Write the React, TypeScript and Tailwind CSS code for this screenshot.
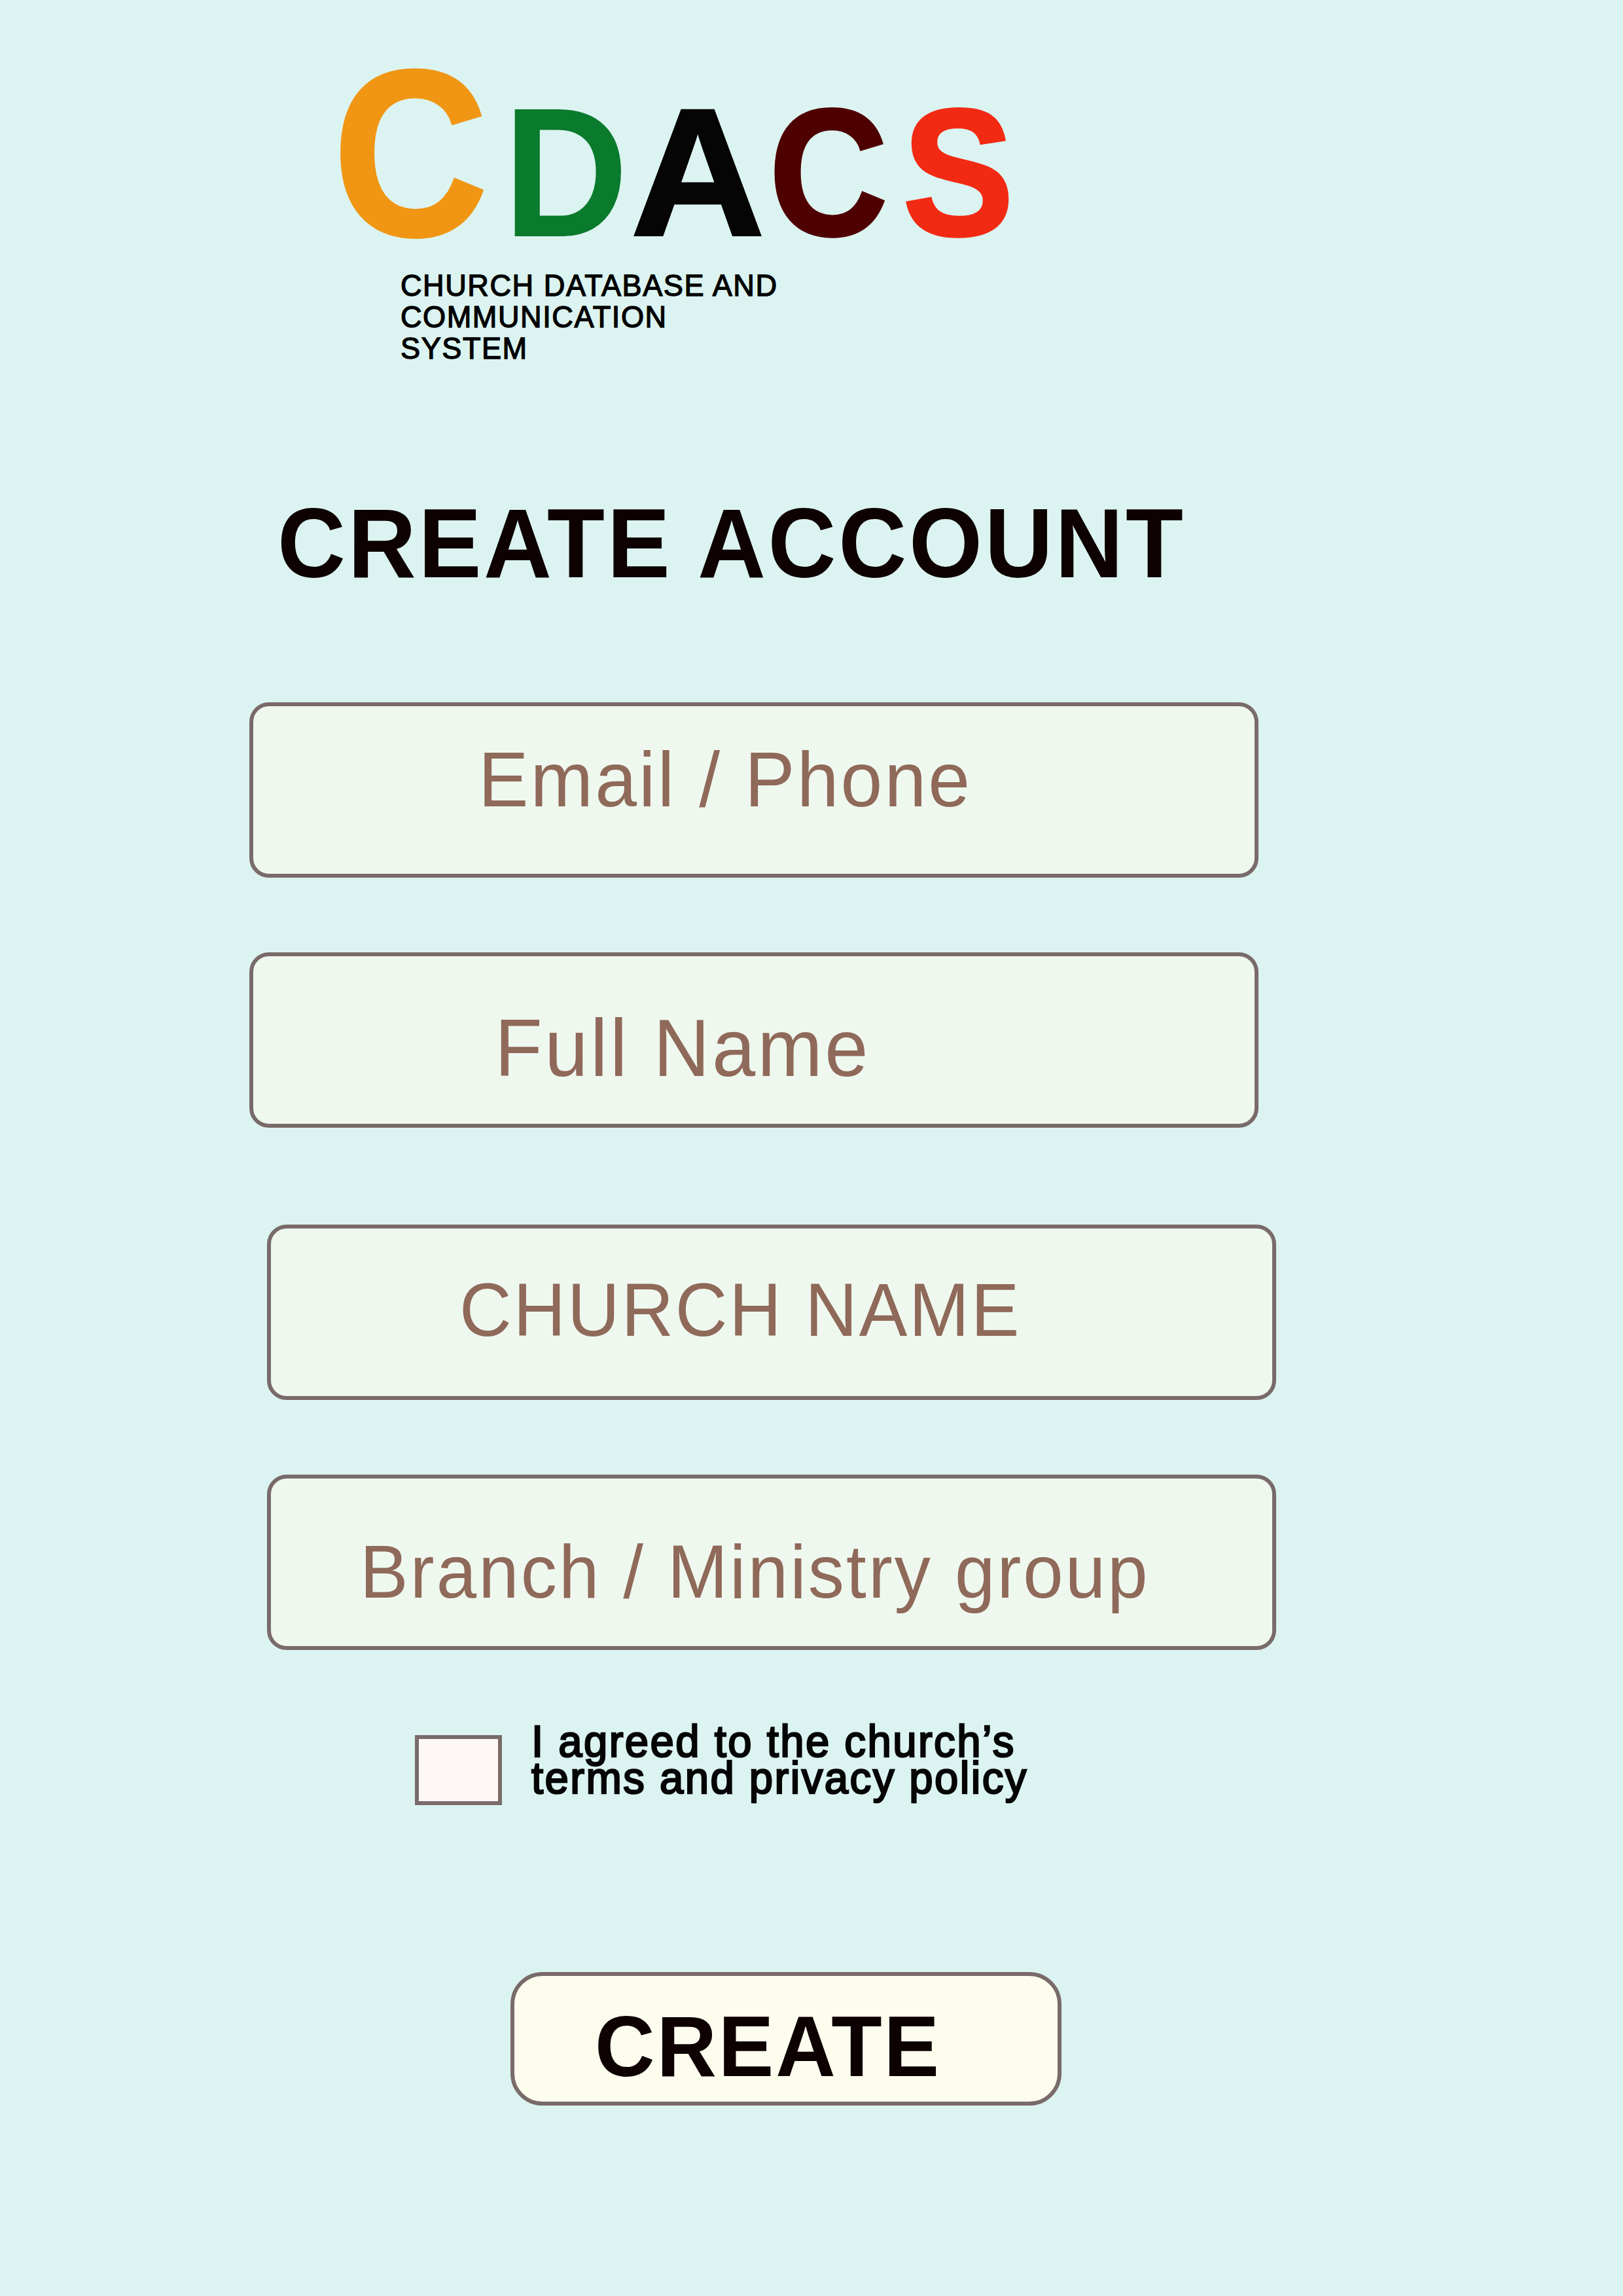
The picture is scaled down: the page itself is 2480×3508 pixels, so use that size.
const fields = [
  { label: "Email / Phone", box: "ml-[381px] mt-[168px] pl-[343.5px] pt-[52px]", text: "text-[119.5px] tracking-[3.2px]" },
  { label: "Full Name", box: "ml-[381px] mt-[114px] pl-[368.5px] pt-[78px]", text: "text-[124px] tracking-[3.65px]" },
  { label: "CHURCH NAME", box: "ml-[408px] mt-[148px] pl-[287.5px] pt-[67px]", text: "text-[115px] tracking-[2.85px]" },
  { label: "Branch / Ministry group", box: "ml-[408px] mt-[114px] pl-[135.5px] pt-[85px]", text: "text-[115px] tracking-[3.25px]" },
];

function Logo() {
  return (
    <div className="mt-[56px] ml-[509px] flex h-[294px] items-baseline leading-none font-bold">
      <span className="origin-left -translate-y-[2px] scale-x-[0.906] text-[361px] text-[#f09614] [-webkit-text-stroke:5px_#f09614]">C</span>
      <span className="-ml-[1px] origin-left scale-x-[0.938] text-[282px] text-[#0a7a2d]">D</span>
      <span className="-ml-[8px] origin-left -translate-y-[2px] scale-x-[1.024] text-[276.4px] text-[#050505] [-webkit-text-stroke:4px_#050505]">A</span>
      <span className="ml-[11.5px] origin-left -translate-y-[2px] scale-x-[0.91] text-[276.4px] text-[#4f0101] [-webkit-text-stroke:4px_#4f0101]">C</span>
      <span className="ml-[4px] origin-left -translate-y-[2px] scale-x-[0.924] text-[276.4px] text-[#f22a14] [-webkit-text-stroke:4px_#f22a14]">S</span>
    </div>
  );
}

export default function App() {
  return (
    <main className="flex h-[3508px] w-[2480px] flex-col items-start overflow-hidden bg-[#dcf4f1] font-['Liberation_Sans',Arial,sans-serif] whitespace-nowrap">
      <Logo />
      <p className="mt-[62px] ml-[611.6px] origin-left scale-x-[0.96] text-[47px] leading-[48px] tracking-[1.6px] text-black [-webkit-text-stroke:1.4px_#000]">
        CHURCH DATABASE AND
        <br />
        COMMUNICATION
        <br />
        SYSTEM
      </p>

      <h1 className="mt-[199px] ml-[423.6px] origin-left scale-x-[0.96] text-[150px] leading-none font-bold tracking-[3.85px] text-[#0d0101]">
        CREATE ACCOUNT
      </h1>

      {fields.map((f) => (
        <div
          key={f.label}
          className={`flex h-[268px] w-[1542px] shrink-0 items-start rounded-[30px] border-[6px] border-[#796b6a] bg-[#eff8ef] ${f.box}`}
        >
          <span className={`origin-left scale-x-[0.96] leading-none text-[#8f6959] ${f.text}`}>{f.label}</span>
        </div>
      ))}

      <label className="mt-[111px] ml-[634px] flex h-[126px] items-start">
        <span className="mt-[19px] h-[107px] w-[133px] border-[6px] border-[#796b6a] bg-[#fdf7f7]" />
        <span className="ml-[45px] origin-left scale-x-[0.96] text-[68px] leading-[56px] tracking-[2.55px] text-[#050505] [-webkit-text-stroke:2.6px_#050505]">
          I agreed to the church’s
          <br />
          terms and privacy policy
        </span>
      </label>

      <button className="mt-[255px] ml-[780px] flex h-[204px] w-[842px] items-start rounded-[49px] border-[6px] border-[#796b6a] bg-[#fdfdee] pt-[42px] pl-[123px]">
        <span className="origin-left scale-x-[0.96] text-[132px] leading-none font-bold tracking-[3px] text-[#0d0101]">CREATE</span>
      </button>
    </main>
  );
}
